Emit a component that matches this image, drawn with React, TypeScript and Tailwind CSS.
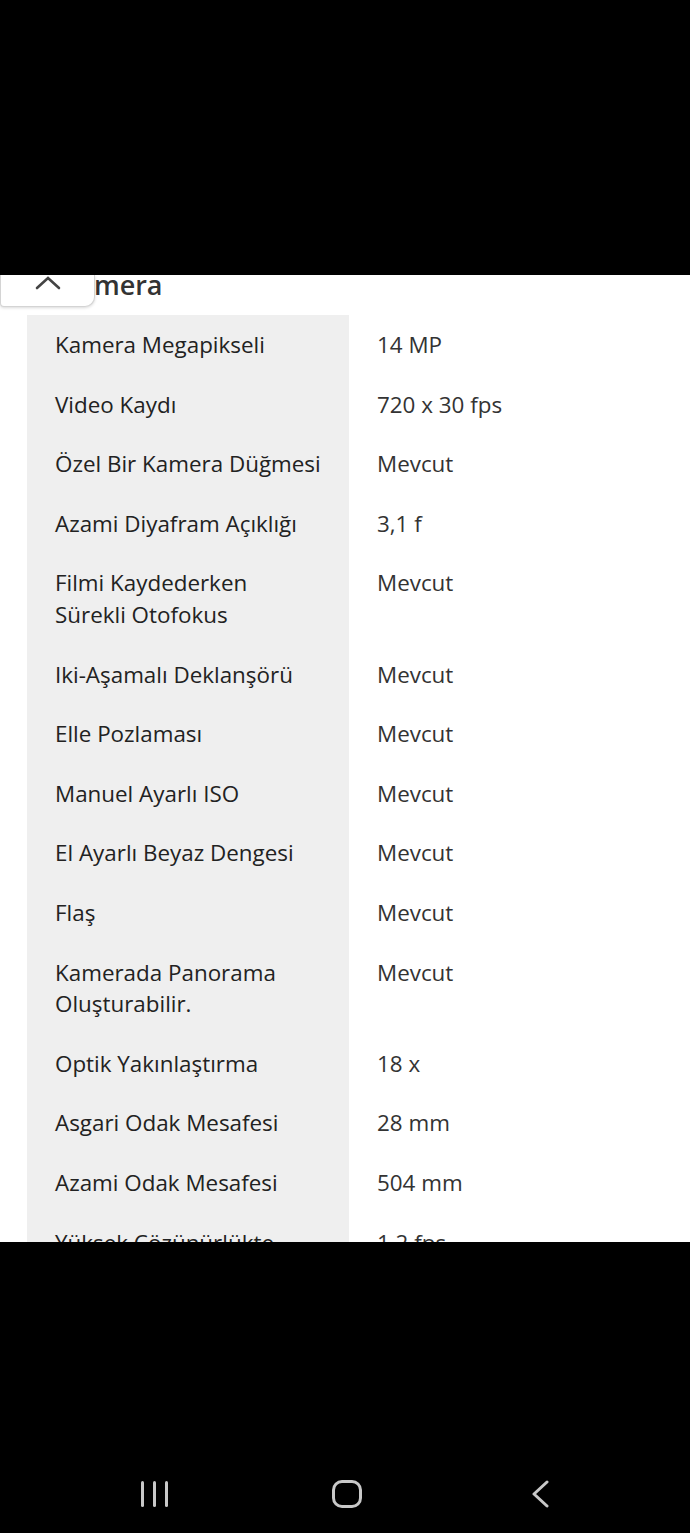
import React from 'react';

interface Spec {
  label: string;
  value: string;
}

const specs: Spec[] = [
  { label: 'Kamera Megapikseli', value: '14 MP' },
  { label: 'Video Kaydı', value: '720 x 30 fps' },
  { label: 'Özel Bir Kamera Düğmesi', value: 'Mevcut' },
  { label: 'Azami Diyafram Açıklığı', value: '3,1 f' },
  { label: 'Filmi Kaydederken Sürekli Otofokus', value: 'Mevcut' },
  { label: 'Iki-Aşamalı Deklanşörü', value: 'Mevcut' },
  { label: 'Elle Pozlaması', value: 'Mevcut' },
  { label: 'Manuel Ayarlı ISO', value: 'Mevcut' },
  { label: 'El Ayarlı Beyaz Dengesi', value: 'Mevcut' },
  { label: 'Flaş', value: 'Mevcut' },
  { label: 'Kamerada Panorama Oluşturabilir.', value: 'Mevcut' },
  { label: 'Optik Yakınlaştırma', value: '18 x' },
  { label: 'Asgari Odak Mesafesi', value: '28 mm' },
  { label: 'Azami Odak Mesafesi', value: '504 mm' },
  { label: 'Yüksek Çözünürlükte Sürekli Çekim', value: '1,2 fps' },
];

const App: React.FC = () => {
  return (
    <div className="w-[690px] h-[1533px] bg-black flex flex-col font-['Open_Sans',sans-serif]">
      <div className="h-[275px] shrink-0" />

      <div className="relative h-[967px] shrink-0 bg-white overflow-hidden">
        {/* section header */}
        <div className="h-[40px] pl-[61px] flex items-start">
          <span className="-mt-[4px] text-[27px] leading-[28px] font-semibold text-[#333]">
            Kamera
          </span>
        </div>

        {/* collapse button overlay */}
        <div className="absolute left-0 top-0 w-[95px] h-[32px] bg-white border border-t-0 border-[#d4d4d4] rounded-br-[10px] rounded-bl-[4px] shadow-[0_1px_3px_rgba(0,0,0,0.15)] flex justify-center">
          <svg width="28" height="16" viewBox="0 0 28 16">
            <path d="M3 13 L14 3 L25 13" fill="none" stroke="#444" strokeWidth="2.6" strokeLinecap="round" />
          </svg>
        </div>

        <div className="mx-[27px] text-[22.4px] leading-[31.6px]">
          {specs.map((s) => (
            <div key={s.label} className="flex">
              <div className="w-[322px] shrink-0 bg-[#efefef] pl-[28px] pr-[27px] py-[14px] text-[#222]">
                {s.label}
              </div>
              <div className="flex-1 pl-[28px] pr-[20px] py-[14px] text-[#333]">
                {s.value}
              </div>
            </div>
          ))}
        </div>
      </div>

      {/* android nav bar */}
      <div className="flex-1 flex items-end pb-[25px]">
        <div className="w-full h-[28px] relative flex items-center">
          <div className="absolute left-[141px] top-[1px] flex gap-[9px]">
            <div className="w-[3px] h-[26px] bg-[#c8c8c8] rounded-full" />
            <div className="w-[3px] h-[26px] bg-[#c8c8c8] rounded-full" />
            <div className="w-[3px] h-[26px] bg-[#c8c8c8] rounded-full" />
          </div>
          <div className="absolute left-[332px] top-0 w-[30px] h-[28px] border-[3px] border-[#c8c8c8] rounded-[10px]" />
          <svg className="absolute left-[530px] top-0" width="20" height="28" viewBox="0 0 20 28">
            <path d="M17 2 L4 14 L17 26" fill="none" stroke="#c8c8c8" strokeWidth="3" strokeLinecap="round" strokeLinejoin="round" />
          </svg>
        </div>
      </div>
    </div>
  );
};

export default App;
